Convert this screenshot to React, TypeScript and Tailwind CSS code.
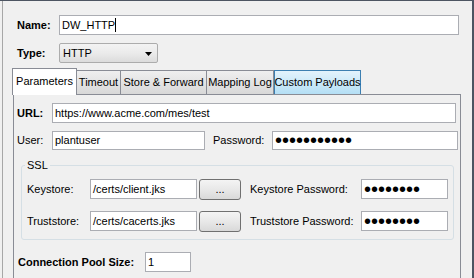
import React from "react";

function Dots({ n }: { n: number }) {
  return (
    <span className="text-[20px] leading-[13px] tracking-[0px] font-['Liberation_Sans',Arial,sans-serif]">
      {"•".repeat(n)}
    </span>
  );
}

function Btn() {
  return (
    <div className="w-[42px] h-[21px] ml-[2px] border border-[#707070] rounded-[3px] bg-linear-to-b from-[#f4f4f4] via-[#e8e8e8] to-[#d9d9d9] flex items-center justify-center leading-none pb-[1px]">
      ...
    </div>
  );
}

export default function App() {
  return (
    <div className="w-[474px] h-[278px] overflow-hidden bg-[#f0f0f0] border-t border-r-2 border-[#4d5562] font-['Liberation_Sans',Arial,sans-serif] text-[11px] leading-[13px] text-black">
      <div className="ml-[2px] h-full border-l border-[#a7a7a7] flex flex-col">
        {/* Name */}
        <div className="mt-[14px] flex items-center pl-[14px]">
          <span className="w-[42px] font-bold">Name:</span>
          <div className="w-[400px] h-[20px] bg-white border border-[#abadb3] flex items-center pl-[2px]">
            <span>DW_HTTP</span>
            <span className="w-px h-[14px] bg-black" />
          </div>
        </div>
        {/* Type */}
        <div className="mt-[8px] flex items-center pl-[14px]">
          <span className="w-[42px] font-bold">Type:</span>
          <div className="w-[99px] h-[20px] border border-[#acacac] rounded-[2px] bg-linear-to-b from-[#f3f3f3] via-[#ebebeb] to-[#dcdcdc] flex items-center pl-[3px] pr-[4px] justify-between">
            <span>HTTP</span>
            <svg width="8" height="5" viewBox="0 0 8 5" className="mt-[2px]">
              <polygon points="0,0 7,0 3.5,4" fill="#000" />
            </svg>
          </div>
        </div>
        {/* Tabs */}
        <div className="mt-[5px] ml-[9px] h-[26px] flex items-end whitespace-nowrap">
          <div className="w-[65px] h-[27px] -mb-px relative z-10 bg-white border border-b-0 border-[#898c95] flex items-center justify-center pb-[2px]">
            Parameters
          </div>
          <div className="w-[44px] h-[24px] border border-l-0 border-b-0 border-[#898c95] bg-linear-to-b from-[#efefef] to-[#d8d8d8] flex items-center justify-center">
            Timeout
          </div>
          <div className="w-[86px] h-[24px] border border-l-0 border-b-0 border-[#898c95] bg-linear-to-b from-[#efefef] to-[#d8d8d8] flex items-center justify-center">
            Store &amp; Forward
          </div>
          <div className="w-[67px] h-[24px] border border-l-0 border-b-0 border-[#898c95] bg-linear-to-b from-[#efefef] to-[#d8d8d8] flex items-center justify-center">
            Mapping Log
          </div>
          <div className="w-[87px] h-[24px] border border-b-0 border-[#3c7fb1] bg-linear-to-b from-[#e3f3fc] to-[#b4dff5] flex items-center justify-center">
            Custom Payloads
          </div>
        </div>
        {/* Panel */}
        <div className="ml-[10px] w-[448px] flex-1 border border-b-0 border-[#898c95] flex flex-col">
          <div className="mt-[8px] pl-[3px] flex items-center">
            <span className="w-[35px] font-bold">URL:</span>
            <div className="w-[404px] h-[20px] bg-white border border-[#abadb3] flex items-center pl-[2px]">
              https://www.acme.com/mes/test
            </div>
          </div>
          <div className="mt-[8px] pl-[3px] flex items-center">
            <span className="w-[35px]">User:</span>
            <div className="w-[153px] h-[19px] bg-white border border-[#abadb3] flex items-center pl-[2px]">
              plantuser
            </div>
            <span className="ml-[8px] w-[59px]">Password:</span>
            <div className="w-[186px] h-[19px] bg-white border border-[#abadb3] flex items-center pl-[2px]">
              <Dots n={11} />
            </div>
          </div>
          <fieldset className="mt-[9px] ml-[7px] w-[432px] border border-[#d5dfe5] rounded-[3px] px-[5px] pt-[7px] pb-[7px]">
            <legend className="px-[2px] -ml-[2px] leading-[13px]">SSL</legend>
            <div className="flex items-start h-[21px]">
              <span className="w-[63px] h-[20px] flex items-center">Keystore:</span>
              <div className="w-[107px] h-[20px] bg-white border border-[#abadb3] flex items-center pl-[2px]">
                /certs/client.jks
              </div>
              <Btn />
              <span className="ml-[9px] w-[111px] h-[20px] flex items-center">Keystore Password:</span>
              <div className="w-[87px] h-[20px] bg-white border border-[#abadb3] flex items-center pl-[2px]">
                <Dots n={8} />
              </div>
            </div>
            <div className="mt-[11px] flex items-start h-[21px]">
              <span className="w-[63px] h-[20px] flex items-center">Truststore:</span>
              <div className="w-[107px] h-[20px] bg-white border border-[#abadb3] flex items-center pl-[2px]">
                /certs/cacerts.jks
              </div>
              <Btn />
              <span className="ml-[9px] w-[111px] h-[20px] flex items-center">Truststore Password:</span>
              <div className="w-[87px] h-[20px] bg-white border border-[#abadb3] flex items-center pl-[2px]">
                <Dots n={8} />
              </div>
            </div>
          </fieldset>
          <div className="mt-[12px] pl-[4px] flex items-center">
            <span className="w-[127px] font-bold">Connection Pool Size:</span>
            <div className="w-[46px] h-[20px] bg-white border border-[#abadb3] flex items-center pl-[2px]">
              1
            </div>
          </div>
        </div>
      </div>
    </div>
  );
}
